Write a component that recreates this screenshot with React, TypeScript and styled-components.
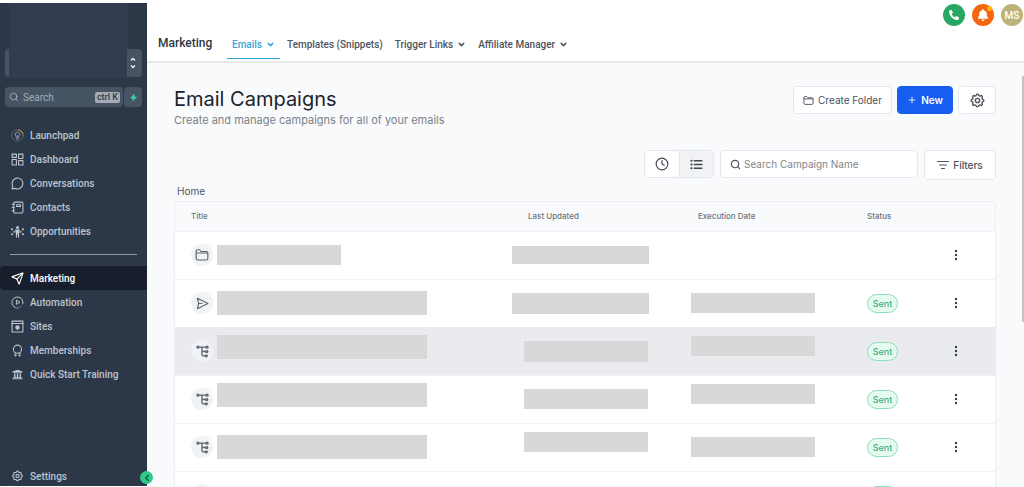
import React from "react";
import styled, { createGlobalStyle, css } from "styled-components";
import {
  ChevronDown,
  ChevronLeft,
  Clock,
  MessageCircle,
  Plus,
  Search,
  Send,
} from "lucide-react";
import { HiOutlineCog } from "react-icons/hi";
import { FaBell, FaPhoneAlt, FaUniversity } from "react-icons/fa";

const Global = createGlobalStyle`
  *, *::before, *::after { box-sizing: border-box; }
  body { margin: 0; background: #fff; font-family: Roboto, "Liberation Sans", sans-serif; }
  button, input { font: inherit; }
  button { cursor: pointer; }
  a { color: inherit; text-decoration: none; }
`;

const ui = css`
  font-family: Inter, "Liberation Sans", sans-serif;
`;

/* ---------- shell ---------- */

const Shell = styled.div`
  display: flex;
  height: 100vh;
  overflow: hidden;
  background: #fff;
`;

const Sidebar = styled.aside`
  position: relative;
  flex: 0 0 147px;
  min-width: 0;
  margin: 3px 0 1px;
  display: flex;
  flex-direction: column;
  background: #2c3848;
  color: #bac4d0;
`;

const AccountArea = styled.div`
  height: 75px;
  padding: 0 19px 0 9px;
`;

const AccountPatch = styled.div`
  height: 75px;
  background: #323c4e;
`;

const AccountSwitch = styled.button`
  display: flex;
  justify-content: flex-end;
  align-items: center;
  margin: -29px 5px 10px;
  height: 28px;
  padding: 0 6px 0 0;
  border: 0;
  border-radius: 4px;
  color: #e6ebf0;
  background: linear-gradient(
    to right,
    #465363 4px,
    #323c4e 4px,
    #323c4e calc(100% - 15px),
    #465363 calc(100% - 15px)
  );
`;

const SearchRow = styled.div`
  display: flex;
  gap: 1px;
  margin: 0 5px;
  height: 20px;
`;

const SearchBox = styled.label`
  flex: 1;
  min-width: 0;
  display: flex;
  align-items: center;
  gap: 4px;
  padding: 0 3px 0 4px;
  border-radius: 4px;
  background: #475463;
  color: #a9b4c0;
  svg {
    flex: none;
  }
`;

const SearchInput = styled.input`
  flex: 1;
  width: 100%;
  min-width: 0;
  padding: 0;
  border: 0;
  outline: 0;
  background: transparent;
  color: inherit;
  font-size: 10px;
  &::placeholder {
    color: #a0acb9;
    opacity: 1;
  }
`;

const Kbd = styled.kbd`
  flex: none;
  padding: 0 2px;
  border-radius: 2px;
  background: #a3acb6;
  color: #303b49;
  font: 500 9px/11px Roboto, sans-serif;
`;

const QuickButton = styled.button`
  flex: 0 0 18px;
  display: grid;
  place-items: center;
  padding: 0;
  border: 0;
  border-radius: 4px;
  background: #475463;
  color: #3bd6ac;
`;

const NavGroup = styled.nav`
  display: flex;
  flex-direction: column;
`;

const MainNav = styled(NavGroup)`
  padding-top: 16px;
`;

const Divider = styled.hr`
  width: 127px;
  height: 1px;
  margin: 11px 10px;
  border: 0;
  background: #8b98a6;
`;

const NavItem = styled.a<{ $active?: boolean; $compact?: boolean }>`
  display: flex;
  align-items: center;
  gap: 6px;
  height: ${(p) => (p.$compact ? 20 : 24)}px;
  padding-left: 11px;
  font-size: 10px;
  font-weight: 500;
  white-space: nowrap;
  border-radius: 4px 0 0 4px;
  color: ${(p) => (p.$active ? "#ffffff" : "#bcc5d0")};
  background: ${(p) => (p.$active ? "#191e2c" : "transparent")};
  svg {
    flex: 0 0 13px;
  }
`;

const SidebarFoot = styled.div`
  margin-top: auto;
`;

const Collapse = styled.button`
  position: absolute;
  right: -6px;
  bottom: 2px;
  width: 13px;
  height: 13px;
  display: grid;
  place-items: center;
  padding: 0;
  border: 0;
  border-radius: 50%;
  background: #2fcb86;
  color: #0b4f3a;
  z-index: 2;
`;

const Main = styled.div`
  flex: 1;
  min-width: 0;
  display: flex;
  flex-direction: column;
`;

/* ---------- header ---------- */

const Header = styled.header`
  border-bottom: 2px solid #e6e9eb;
  background: #fff;
`;

const Actions = styled.div`
  display: flex;
  justify-content: flex-end;
  gap: 7px;
  padding: 4px 1px 4px 0;
`;

const RoundButton = styled.button<{ $bg: string }>`
  position: relative;
  width: 22px;
  height: 22px;
  display: grid;
  place-items: center;
  padding: 0;
  border: 0;
  border-radius: 50%;
  background: ${(p) => p.$bg};
  color: #fff;
  font-size: 10px;
  font-weight: 500;
`;

const Dot = styled.span`
  position: absolute;
  top: 2px;
  right: 2px;
  width: 5px;
  height: 5px;
  border-radius: 50%;
  background: #fbb617;
`;

const Tabs = styled.nav`
  display: flex;
  align-items: stretch;
  height: 29px;
  margin-bottom: 2px;
  padding-left: 11px;
`;

const Section = styled.span`
  display: flex;
  align-items: center;
  width: 69px;
  padding-bottom: 3px;
  font-size: 12px;
  font-weight: 500;
  color: #2f3740;
`;

const Tab = styled.a<{ $active?: boolean }>`
  display: flex;
  align-items: center;
  gap: 4px;
  margin-right: 2px;
  padding: 0 5px;
  font-size: 10px;
  font-weight: 500;
  white-space: nowrap;
  color: ${(p) => (p.$active ? "#39a3dc" : "#4d555e")};
  border-bottom: 1px solid ${(p) => (p.$active ? "#39a3dc" : "transparent")};
`;

/* ---------- page ---------- */

const Page = styled.main`
  ${ui}
  position: relative;
  flex: 1;
  min-height: 0;
  overflow: hidden;
  padding: 23px 28px 0 27px;
  background: #f9fafc;
`;

const ScrollThumb = styled.div`
  position: absolute;
  top: 13px;
  right: 0;
  width: 2px;
  height: 246px;
  background: #c2c4c6;
`;

const TitleRow = styled.div`
  display: flex;
  justify-content: space-between;
  align-items: flex-start;
`;

const Title = styled.h1`
  margin: 0;
  font-size: 20px;
  line-height: 26px;
  font-weight: 400;
  color: #1c242d;
`;

const Subtitle = styled.p`
  margin: 0;
  font-size: 11px;
  line-height: 16px;
  color: #7b8288;
`;

const ButtonRow = styled.div`
  display: flex;
  gap: 5px;
`;

const Button = styled.button<{ $primary?: boolean; $width: number }>`
  display: flex;
  align-items: center;
  justify-content: center;
  gap: 4px;
  width: ${(p) => p.$width}px;
  height: 28px;
  padding: 0;
  border: 1px solid ${(p) => (p.$primary ? "#155eef" : "#e4e7eb")};
  border-radius: 4px;
  background: ${(p) => (p.$primary ? "#155eef" : "#fff")};
  color: ${(p) => (p.$primary ? "#fff" : "#4b525b")};
  font-size: 10px;
  font-weight: ${(p) => (p.$primary ? 600 : 400)};
  white-space: nowrap;
`;

const FilterButton = styled(Button)`
  height: 30px;
  font-weight: 500;
`;

const Toolbar = styled.div`
  display: flex;
  justify-content: flex-end;
  align-items: flex-start;
  gap: 6px;
  margin-top: 22px;
`;

const Toggle = styled.div`
  display: flex;
  width: 70px;
  height: 28px;
  border: 1px solid #e4e7eb;
  border-radius: 4px;
  overflow: hidden;
  background: #fff;
`;

const ToggleButton = styled.button<{ $on?: boolean }>`
  flex: 1;
  display: grid;
  place-items: center;
  padding: 0;
  border: 0;
  color: #3f474f;
  background: ${(p) => (p.$on ? "#f1f2f5" : "#fff")};
  & + & {
    border-left: 1px solid #e4e7eb;
  }
`;

const CampaignSearch = styled.label`
  display: flex;
  align-items: center;
  gap: 3px;
  width: 198px;
  height: 28px;
  padding: 0 9px;
  border: 1px solid #e4e7eb;
  border-radius: 4px;
  background: #fff;
  color: #4b525b;
`;

const CampaignInput = styled.input`
  flex: 1;
  min-width: 0;
  padding: 0;
  border: 0;
  outline: 0;
  background: transparent;
  font-size: 10px;
  &::placeholder {
    color: #7f868e;
    opacity: 1;
  }
`;

const Crumb = styled.a`
  display: block;
  width: fit-content;
  margin: 4px 0 3px 3px;
  font-size: 10px;
  line-height: 14px;
  color: #4f565e;
`;

const TableFrame = styled.div`
  border: 1px solid #eceef1;
  border-radius: 4px 4px 0 0;
`;

const Table = styled.table`
  width: 100%;
  table-layout: fixed;
  border-collapse: collapse;
`;

const Th = styled.th`
  height: 29px;
  padding: 0 16px;
  text-align: left;
  font-size: 8px;
  font-weight: 500;
  color: #6d747b;
`;

const Tr = styled.tr<{ $hover?: boolean }>`
  height: 48px;
  border-top: 1px solid ${(p) => (p.$hover ? "#e9ebee" : "#f0f1f4")};
  background: ${(p) => (p.$hover ? "#e9ebee" : "#fff")};
`;

const Td = styled.td<{ $pad?: string; $top?: boolean }>`
  height: 48px;
  padding: ${(p) => p.$pad ?? "0 16px"};
  padding-top: ${(p) => (p.$top ? 8 : 0)}px;
  vertical-align: ${(p) => (p.$top ? "top" : "middle")};
`;

const TitleCell = styled.div`
  display: flex;
  align-items: center;
  gap: 4px;
  height: 46px;
`;

const Badge = styled.span`
  flex: 0 0 22px;
  height: 22px;
  display: grid;
  place-items: center;
  border-radius: 50%;
  background: #f1f2f6;
  color: #5d6570;
`;

const Bar = styled.div<{ $w: number; $h: number }>`
  width: ${(p) => p.$w}px;
  height: ${(p) => p.$h}px;
  background: #d8d8d8;
`;

const TitleBar = styled(Bar)<{ $top?: boolean }>`
  align-self: ${(p) => (p.$top ? "flex-start" : "center")};
  margin-top: ${(p) => (p.$top ? 7 : 0)}px;
`;

const EndBar = styled(Bar)`
  margin-left: auto;
`;

const Pill = styled.span`
  display: block;
  width: 31px;
  height: 19px;
  border: 1px solid #8fdcb8;
  border-radius: 10px;
  background: #e6fbf0;
  color: #3fae7c;
  font-size: 9px;
  font-weight: 500;
  line-height: 17px;
  text-align: center;
`;

const MoreButton = styled.button`
  display: grid;
  place-items: center;
  width: 16px;
  height: 20px;
  padding: 0;
  border: 0;
  background: transparent;
  color: #3a4048;
`;

/* ---------- icons ---------- */

type IconProps = { size?: number; children?: React.ReactNode; w?: number };

const Line = ({ size = 13, w = 2, children }: IconProps) => (
  <svg
    width={size}
    height={size}
    viewBox="0 0 24 24"
    fill="none"
    stroke="currentColor"
    strokeWidth={w}
    strokeLinecap="round"
    strokeLinejoin="round"
    aria-hidden="true"
  >
    {children}
  </svg>
);

const LaunchIcon = () => (
  <Line w={1.4}>
    <circle cx="12" cy="12" r="10.5" stroke="#66727f" />
    <path d="M14 1.7A10.5 10.5 0 0 1 22 9" stroke="#c08f3f" strokeWidth="2" />
    <path
      d="M9.5 15.5v-2.2a4.2 4.2 0 1 1 5 0v2.2zM10.5 18.5h3M12 15v-3M8 9.5l1 1"
      stroke="#8a96a4"
      strokeWidth="1.8"
    />
  </Line>
);

const DashboardIcon = () => (
  <Line w={2}>
    <rect x="2" y="2" width="8" height="6" />
    <rect x="14" y="2" width="8" height="8" />
    <rect x="2" y="12" width="8" height="10" />
    <rect x="14" y="14" width="8" height="8" />
  </Line>
);

const ContactsIcon = () => (
  <Line w={2}>
    <rect x="5" y="2" width="17" height="20" rx="2" />
    <path d="M2 6h4M2 12h4M2 18h4" />
    <path d="M10.5 7h7v3h-7z" />
  </Line>
);

const OpportunitiesIcon = () => (
  <svg width={13} height={13} viewBox="0 0 24 24" fill="currentColor" aria-hidden="true">
    <circle cx="12" cy="4.5" r="2.8" />
    <path d="M7.5 8.5h9L15 15v8h-2.200v-6h-1.600v6H9v-8z" />
    <circle cx="2" cy="8" r="2" />
    <circle cx="2" cy="17" r="2" />
    <circle cx="22" cy="8" r="2" />
    <circle cx="22" cy="17" r="2" />
    <path d="M4 11.500h4v2.200H4zM16 11.500h4v2.200h-4z" />
  </svg>
);

const AutomationIcon = () => (
  <Line w={1.8}>
    <path d="M8 21.500A10.200 10.200 0 1 1 21.800 14.500" />
    <path d="M10 8.500v7l6-3.500z" />
    <path d="M11 22.200h2M17 20.500l1-1" />
  </Line>
);

const SitesIcon = () => (
  <Line w={2}>
    <rect x="2" y="2" width="20" height="20" />
    <path d="M2 6.500h20" />
    <circle cx="12" cy="14" r="3.2" fill="currentColor" />
  </Line>
);

const MembershipIcon = () => (
  <Line w={2}>
    <circle cx="12" cy="9.5" r="7.5" />
    <path d="M7.500 16v6l2.500-1.500M16.500 16v6L14 20.500" />
  </Line>
);

const FolderIcon = ({ size }: IconProps) => (
  <Line size={size} w={2}>
    <path d="M2 8V5.500A2.500 2.500 0 0 1 4.500 3H8l2.500 3H19.500A2.500 2.500 0 0 1 22 8.500v9.500a2.500 2.500 0 0 1-2.500 2.500h-15A2.500 2.500 0 0 1 2 18z" />
    <path d="M2.500 8.500h19" />
  </Line>
);

const SendRowIcon = () => (
  <Line w={2}>
    <path d="M2.500 2.500 22 12 2.500 21.500 5 12z" />
    <path d="M5 12h6" />
  </Line>
);

const FlowIcon = () => (
  <Line w={2.4}>
    <circle cx="3.5" cy="4" r="1.8" />
    <path d="M5.500 4H19M11 4v14a2 2 0 0 0 2 2h5M11 12h7" />
    <circle cx="20.5" cy="4" r="1.8" />
    <circle cx="20" cy="12" r="1.8" />
    <circle cx="19" cy="20" r="1.8" />
  </Line>
);

const ListIcon = () => (
  <Line w={2.6}>
    <path d="M8 5h14M8 12h14M8 19h14" />
    <path d="M2.500 5h.5M2.500 12h.5M2.500 19h.5" strokeWidth="3.6" />
  </Line>
);

const FilterIcon = () => (
  <Line size={12} w={2.2}>
    <path d="M1 5h22M5 12h14M9 19h6" />
  </Line>
);

const SwitchIcon = () => (
  <svg width={6} height={12} viewBox="0 0 6 12" fill="none" stroke="currentColor" strokeWidth="1.5" aria-hidden="true">
    <path d="M1 3.500 3 1.500l2 2M1 8.500l2 2 2-2" />
  </svg>
);

const BoltIcon = () => (
  <svg width={9} height={9} viewBox="0 0 10 10" fill="currentColor" aria-hidden="true">
    <path d="M6.200.5 1 5.800h3L3.800 9.500 9 4.200H6z" />
  </svg>
);

const MoreIcon = () => (
  <svg width={4} height={12} viewBox="0 0 4 12" fill="currentColor" aria-hidden="true">
    <circle cx="2" cy="2" r="1.2" />
    <circle cx="2" cy="6" r="1.2" />
    <circle cx="2" cy="10" r="1.2" />
  </svg>
);

/* ---------- data ---------- */

const primaryNav = [
  { label: "Launchpad", icon: <LaunchIcon /> },
  { label: "Dashboard", icon: <DashboardIcon /> },
  { label: "Conversations", icon: <MessageCircle size={13} /> },
  { label: "Contacts", icon: <ContactsIcon /> },
  { label: "Opportunities", icon: <OpportunitiesIcon /> },
];

const secondaryNav = [
  { label: "Marketing", icon: <Send size={13} />, active: true },
  { label: "Automation", icon: <AutomationIcon /> },
  { label: "Sites", icon: <SitesIcon /> },
  { label: "Memberships", icon: <MembershipIcon /> },
  { label: "Quick Start Training", icon: <FaUniversity size={11} /> },
];

const tabs = [
  { label: "Emails", menu: true, active: true },
  { label: "Templates (Snippets)" },
  { label: "Trigger Links", menu: true },
  { label: "Affiliate Manager", menu: true },
];

type BarSpec = { w: number; h: number; top?: boolean };
type Row = {
  icon: "folder" | "send" | "flow";
  title?: BarSpec;
  updated?: BarSpec;
  executed?: BarSpec;
  sent?: boolean;
  hover?: boolean;
};

const rows: Row[] = [
  { icon: "folder", title: { w: 124, h: 20 }, updated: { w: 137, h: 18 } },
  {
    icon: "send",
    title: { w: 210, h: 24 },
    updated: { w: 137, h: 21 },
    executed: { w: 124, h: 20 },
    sent: true,
  },
  {
    icon: "flow",
    title: { w: 210, h: 24, top: true },
    updated: { w: 124, h: 21 },
    executed: { w: 124, h: 20, top: true },
    sent: true,
    hover: true,
  },
  {
    icon: "flow",
    title: { w: 210, h: 24, top: true },
    updated: { w: 124, h: 20 },
    executed: { w: 124, h: 20, top: true },
    sent: true,
  },
  {
    icon: "flow",
    title: { w: 210, h: 24 },
    updated: { w: 124, h: 20, top: true },
    executed: { w: 124, h: 20 },
    sent: true,
  },
  { icon: "flow", sent: true },
];

const rowIcons = {
  folder: <FolderIcon size={14} />,
  send: <SendRowIcon />,
  flow: <FlowIcon />,
};

export default function App() {
  return (
    <>
      <Global />
      <Shell>
        <Sidebar>
          <AccountArea>
            <AccountPatch />
          </AccountArea>
          <AccountSwitch aria-label="Switch account">
            <SwitchIcon />
          </AccountSwitch>
          <SearchRow>
            <SearchBox>
              <Search size={10} />
              <SearchInput placeholder="Search" aria-label="Search" />
              <Kbd>ctrl K</Kbd>
            </SearchBox>
            <QuickButton aria-label="Quick actions">
              <BoltIcon />
            </QuickButton>
          </SearchRow>
          <MainNav>
            {primaryNav.map((n) => (
              <NavItem key={n.label} href="#">
                {n.icon}
                {n.label}
              </NavItem>
            ))}
          </MainNav>
          <Divider />
          <NavGroup>
            {secondaryNav.map((n) => (
              <NavItem key={n.label} href="#" $active={n.active}>
                {n.icon}
                {n.label}
              </NavItem>
            ))}
          </NavGroup>
          <SidebarFoot>
            <NavItem href="#" $compact>
              <HiOutlineCog size={14} />
              Settings
            </NavItem>
          </SidebarFoot>
          <Collapse aria-label="Collapse sidebar">
            <ChevronLeft size={10} strokeWidth={3} />
          </Collapse>
        </Sidebar>

        <Main>
          <Header>
            <Actions>
              <RoundButton $bg="#27a763" aria-label="Call">
                <FaPhoneAlt size={10} />
              </RoundButton>
              <RoundButton $bg="#f4660f" aria-label="Notifications">
                <FaBell size={12} />
                <Dot />
              </RoundButton>
              <RoundButton $bg="#bdb37a" aria-label="Profile">
                MS
              </RoundButton>
            </Actions>
            <Tabs>
              <Section>Marketing</Section>
              {tabs.map((t) => (
                <Tab key={t.label} href="#" $active={t.active}>
                  {t.label}
                  {t.menu && <ChevronDown size={9} strokeWidth={4} />}
                </Tab>
              ))}
            </Tabs>
          </Header>

          <Page>
            <TitleRow>
              <div>
                <Title>Email Campaigns</Title>
                <Subtitle>Create and manage campaigns for all of your emails</Subtitle>
              </div>
              <ButtonRow>
                <Button $width={99}>
                  <FolderIcon size={11} />
                  Create Folder
                </Button>
                <Button $width={56} $primary>
                  <Plus size={10} />
                  New
                </Button>
                <Button $width={38} aria-label="Settings">
                  <HiOutlineCog size={17} />
                </Button>
              </ButtonRow>
            </TitleRow>

            <Toolbar>
              <Toggle>
                <ToggleButton aria-label="Recent">
                  <Clock size={14} />
                </ToggleButton>
                <ToggleButton $on aria-label="List">
                  <ListIcon />
                </ToggleButton>
              </Toggle>
              <CampaignSearch>
                <Search size={11} strokeWidth={2.5} />
                <CampaignInput placeholder="Search Campaign Name" aria-label="Search Campaign Name" />
              </CampaignSearch>
              <FilterButton $width={72}>
                <FilterIcon />
                Filters
              </FilterButton>
            </Toolbar>

            <Crumb href="#">Home</Crumb>

            <TableFrame>
              <Table>
                <colgroup>
                  <col />
                  <col style={{ width: 170 }} />
                  <col style={{ width: 169 }} />
                  <col style={{ width: 81 }} />
                  <col style={{ width: 63 }} />
                </colgroup>
                <thead>
                  <tr>
                    <Th>Title</Th>
                    <Th>Last Updated</Th>
                    <Th>Execution Date</Th>
                    <Th>Status</Th>
                    <Th aria-label="Actions" />
                  </tr>
                </thead>
                <tbody>
                  {rows.map((r, i) => (
                    <Tr key={i} $hover={r.hover}>
                      <Td>
                        <TitleCell>
                          <Badge>{rowIcons[r.icon]}</Badge>
                          {r.title && <TitleBar $w={r.title.w} $h={r.title.h} $top={r.title.top} />}
                        </TitleCell>
                      </Td>
                      <Td $pad="0 34px 0 0" $top={r.updated?.top}>
                        {r.updated && <EndBar $w={r.updated.w} $h={r.updated.h} />}
                      </Td>
                      <Td $pad="0 9px" $top={r.executed?.top}>
                        {r.executed && <Bar $w={r.executed.w} $h={r.executed.h} />}
                      </Td>
                      <Td>{r.sent && <Pill>Sent</Pill>}</Td>
                      <Td>
                        <MoreButton aria-label="More options">
                          <MoreIcon />
                        </MoreButton>
                      </Td>
                    </Tr>
                  ))}
                </tbody>
              </Table>
            </TableFrame>
            <ScrollThumb />
          </Page>
        </Main>
      </Shell>
    </>
  );
}
